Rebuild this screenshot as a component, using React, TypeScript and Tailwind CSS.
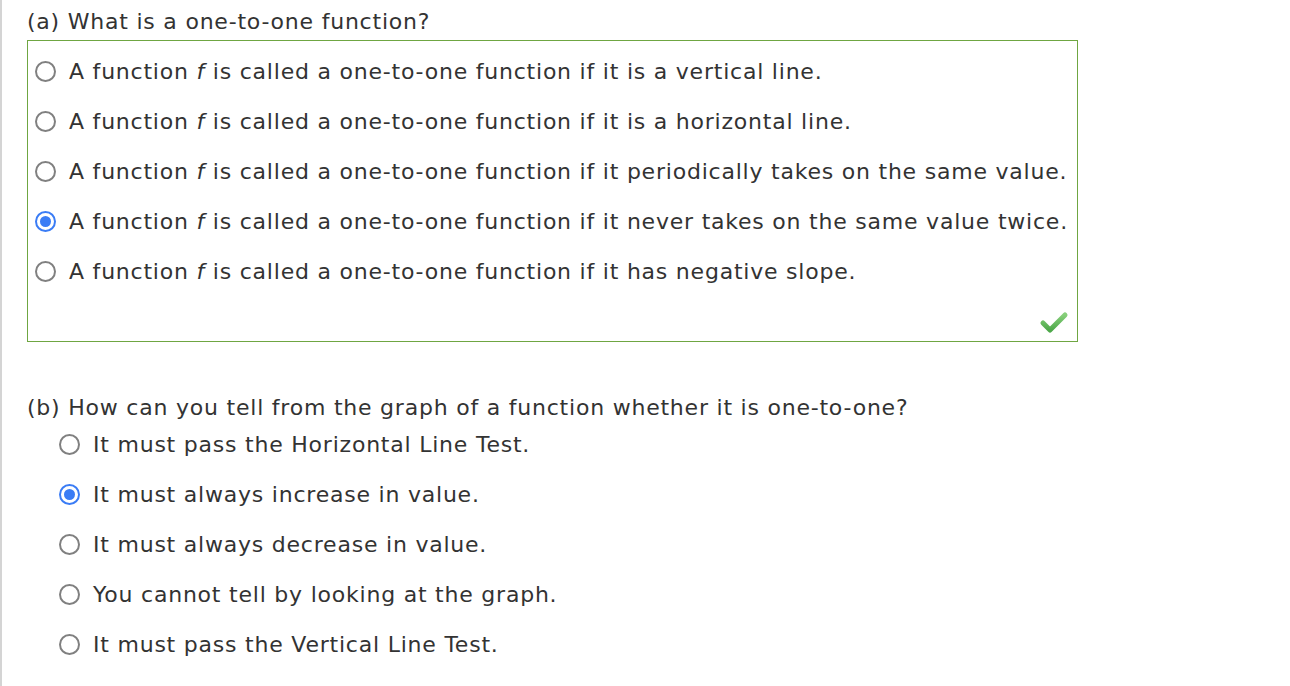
import React from "react";

const partA = [
  { pre: "A function ", post: " is called a one-to-one function if it is a vertical line.", checked: false },
  { pre: "A function ", post: " is called a one-to-one function if it is a horizontal line.", checked: false },
  { pre: "A function ", post: " is called a one-to-one function if it periodically takes on the same value.", checked: false },
  { pre: "A function ", post: " is called a one-to-one function if it never takes on the same value twice.", checked: true },
  { pre: "A function ", post: " is called a one-to-one function if it has negative slope.", checked: false },
];

const partB = [
  { text: "It must pass the Horizontal Line Test.", checked: false },
  { text: "It must always increase in value.", checked: true },
  { text: "It must always decrease in value.", checked: false },
  { text: "You cannot tell by looking at the graph.", checked: false },
  { text: "It must pass the Vertical Line Test.", checked: false },
];

function Radio({ checked }: { checked: boolean }) {
  if (checked) {
    return (
      <span className="flex h-[21px] w-[21px] shrink-0 items-center justify-center rounded-full border-[2px] border-[#3a7cf5] bg-white">
        <span className="h-[11px] w-[11px] rounded-full bg-[#3a7cf5]" />
      </span>
    );
  }
  return <span className="h-[21px] w-[21px] shrink-0 rounded-full border-[2px] border-[#808080] bg-white" />;
}

function CheckMark() {
  return (
    <svg width="30" height="24" viewBox="0 0 30 24">
      <defs>
        <linearGradient id="g" x1="0" y1="0" x2="0" y2="1">
          <stop offset="0" stopColor="#86cf7a" />
          <stop offset="1" stopColor="#4ea84a" />
        </linearGradient>
      </defs>
      <path
        d="M4 12 L11 19 L26 4"
        fill="none"
        stroke="url(#g)"
        strokeWidth="5"
        strokeLinecap="round"
        strokeLinejoin="round"
      />
    </svg>
  );
}

export default function App() {
  return (
    <div
      className="min-h-screen border-l-[2px] border-[#d4d4d4] bg-white pl-[25px] text-[22px] tracking-[0.78px] text-[#333333]"
      style={{ fontFamily: '"DejaVu Sans", Verdana, sans-serif' }}
    >
      <div className="pt-[9px] leading-[26px]">(a) What is a one-to-one function?</div>

      <div className="mt-[5px] w-[1051px] border border-[#6fa642] pt-[5px]">
        {partA.map((o, i) => (
          <div key={i} className="flex h-[50px] items-center gap-[13px] pl-[7px]">
            <Radio checked={o.checked} />
            <span className="whitespace-nowrap">
              {o.pre}
              <i>f</i>
              {o.post}
            </span>
          </div>
        ))}
        <div className="flex h-[45px] items-center justify-end pr-[8px] pt-[8px]">
          <CheckMark />
        </div>
      </div>

      <div className="mt-[53px] leading-[26px]">(b) How can you tell from the graph of a function whether it is one-to-one?</div>

      <div className="pl-[32px]">
        {partB.map((o, i) => (
          <div key={i} className={`flex h-[50px] items-center gap-[13px] ${i === 0 ? "-mt-[2px]" : ""}`}>
            <Radio checked={o.checked} />
            <span className="whitespace-nowrap">{o.text}</span>
          </div>
        ))}
      </div>
    </div>
  );
}
